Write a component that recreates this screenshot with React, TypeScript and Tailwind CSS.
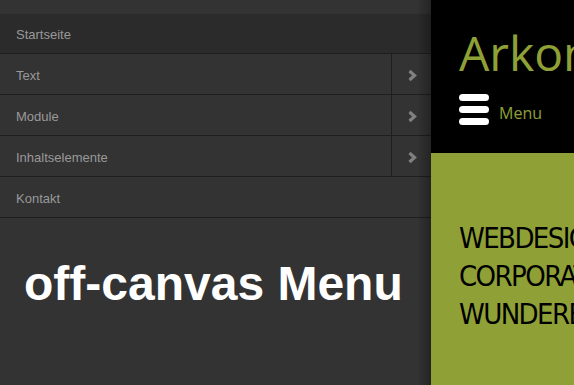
const items = [
  { label: "Startseite", sub: false, active: true },
  { label: "Text", sub: true },
  { label: "Module", sub: true },
  { label: "Inhaltselemente", sub: true },
  { label: "Kontakt", sub: false },
];

const Chevron = () => (
  <svg width="10" height="13" viewBox="0 0 10 13" fill="none">
    <polyline
      points="2.5,2 7.5,6.5 2.5,11"
      stroke="#808080"
      strokeWidth="3.2"
      strokeLinejoin="miter"
    />
  </svg>
);

const App = () => {
  return (
    <div className="flex w-[574px] h-[385px] overflow-hidden bg-[#333]">
      {/* off-canvas panel */}
      <div className="relative w-[431px] shrink-0 h-full bg-[#333] pt-[14px] font-['Liberation_Sans',Arial,sans-serif]">
        <ul>
          {items.map((item) => (
            <li
              key={item.label}
              className={`flex border-b border-[#1e1e1e] ${
                item.active ? "h-[40px] bg-[#2b2b2b]" : "h-[41px] bg-[#333]"
              }`}
            >
              <a className="flex-1 flex items-center pl-4 pt-[3px] text-[13px] text-[#999]">
                {item.label}
              </a>
              {item.sub && (
                <span className="w-[40px] flex items-center justify-center pt-[2px] border-l border-[#1e1e1e]">
                  <Chevron />
                </span>
              )}
            </li>
          ))}
        </ul>
        <h1 className="pl-[24px] pt-[42px] text-[48px] font-bold text-white leading-none">
          off-canvas Menu
        </h1>
        <div className="absolute top-0 right-0 w-[14px] h-full bg-gradient-to-r from-transparent to-black/30" />
      </div>

      {/* page */}
      <div className="flex-1 flex flex-col font-['Open_Sans',sans-serif]">
        <div className="h-[153px] bg-black pl-[28px] pt-[21px] whitespace-nowrap">
          <p className="text-[48px] leading-[64px] text-[#8fa136]">Arkon</p>
          <div className="flex items-center gap-[10px] mt-[8px]">
            <div className="flex flex-col gap-[5px]">
              <span className="block w-[30px] h-[7px] rounded-full bg-white" />
              <span className="block w-[30px] h-[7px] rounded-full bg-white" />
              <span className="block w-[30px] h-[7px] rounded-full bg-white" />
            </div>
            <span className="text-[16px] text-[#8fa136] mt-[8px]">Menu</span>
          </div>
        </div>
        <div className="flex-1 bg-[#8fa136] pl-[28px] pt-[66px] whitespace-nowrap">
          <p className="text-[29px] leading-[38px] text-black font-['DejaVu_Sans_Condensed','Liberation_Sans_Narrow',sans-serif] [font-stretch:condensed] tracking-[-1.6px]">
            WEBDESIGN
            <br />
            CORPORATE
            <br />
            WUNDERBAR
          </p>
        </div>
      </div>
    </div>
  );
};

export default App;
